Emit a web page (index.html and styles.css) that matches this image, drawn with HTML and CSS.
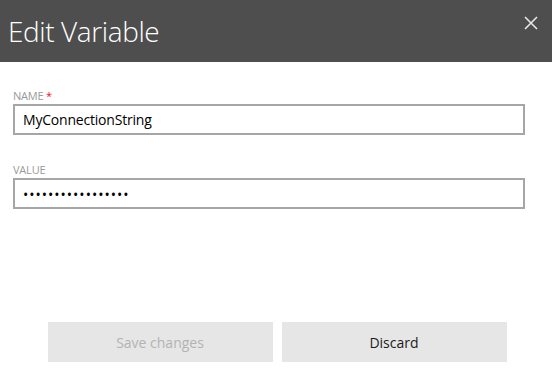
FILE: index.html
```html
<!DOCTYPE html>
<html lang="en">
<head>
    <meta charset="UTF-8">
    <title>Edit Variable</title>
    <link rel="stylesheet" href="styles.css">
</head>
<body>
    <div class="dialog">
        <div class="header">
            <h1>Edit Variable</h1>
            <button class="close" aria-label="Close">
                <svg width="14" height="14" viewBox="0 0 14 14">
                    <path d="M1 1 L13 13 M13 1 L1 13" stroke="#e6e6e6" stroke-width="1.6" fill="none"/>
                </svg>
            </button>
        </div>
        <div class="form">
            <div class="field">
                <label for="nameInput">NAME <span class="req">*</span></label>
                <input type="text" id="nameInput" value="MyConnectionString">
            </div>
            <div class="field">
                <label for="valueInput">VALUE</label>
                <input type="password" id="valueInput" class="secret" value="abcdefghijklmnopq">
            </div>
        </div>
        <div class="actions">
            <button class="btn" disabled>Save changes</button>
            <button class="btn">Discard</button>
        </div>
    </div>
</body>
</html>
```

FILE: styles.css
```css
* {
    margin: 0;
    padding: 0;
    box-sizing: border-box;
    font-family: 'Open Sans', 'Noto Sans', sans-serif;
}

body {
    background: #ffffff;
    width: 552px;
    height: 372px;
    overflow: hidden;
}

.dialog {
    display: flex;
    flex-direction: column;
    height: 372px;
}

.header {
    display: flex;
    justify-content: space-between;
    align-items: flex-start;
    height: 62px;
    background: #4e4e4e;
    padding: 0 14px 0 8px;
}

.header h1 {
    font-weight: 300;
    font-size: 28px;
    color: #ffffff;
    line-height: 62px;
    letter-spacing: -0.4px;
}

.close {
    background: none;
    border: none;
    margin-top: 16px;
    cursor: pointer;
    display: flex;
}

.form {
    padding: 27px 27px 0 13px;
    display: flex;
    flex-direction: column;
    gap: 28px;
}

.field label {
    display: block;
    font-size: 11px;
    color: #9a9a9a;
    line-height: 14px;
    margin-bottom: 1px;
    letter-spacing: -0.2px;
}

.req {
    color: #e81123;
}

.field input {
    display: block;
    width: 100%;
    height: 31px;
    border: 2px solid #a6a6a6;
    padding: 0 8px;
    font-size: 14px;
    letter-spacing: -0.2px;
    color: #000000;
    outline: none;
}

.field .secret {
    letter-spacing: 1px;
    padding-top: 2px;
}

.actions {
    margin-top: auto;
    margin-bottom: 10px;
    display: flex;
    justify-content: center;
    gap: 9px;
    padding-left: 2px;
}

.btn {
    width: 225px;
    height: 40px;
    background: #e6e6e6;
    border: none;
    font-size: 14px;
    color: #1a1a1a;
    cursor: pointer;
}

.btn:disabled {
    color: #b3b3b3;
    cursor: default;
}
```
